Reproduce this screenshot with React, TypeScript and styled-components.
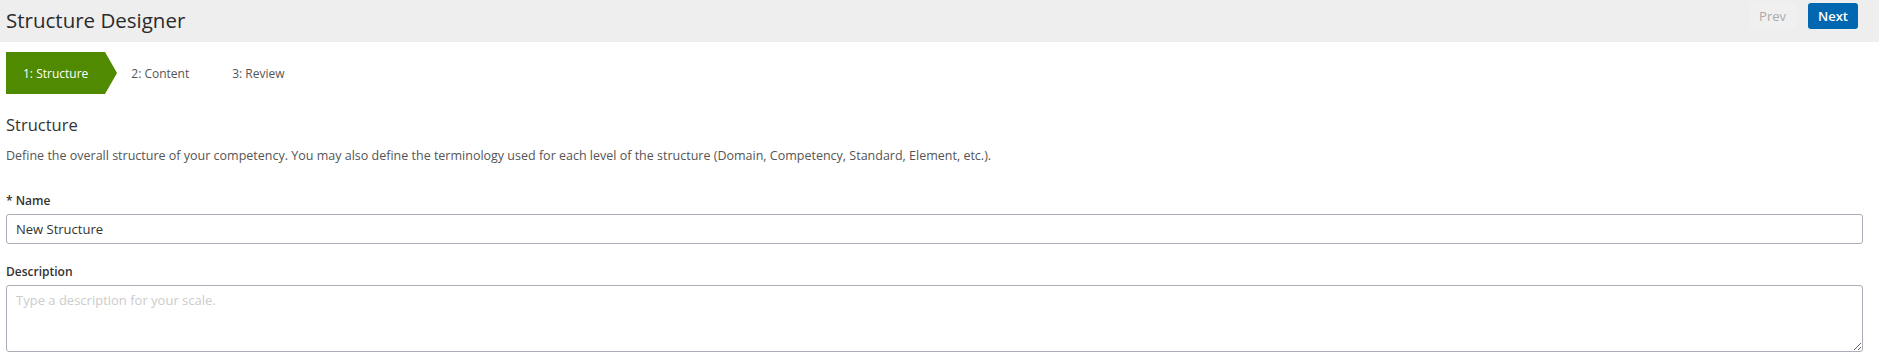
import React from "react";
import styled, { createGlobalStyle } from "styled-components";

const GlobalStyle = createGlobalStyle`
  body {
    margin: 0;
    background: #ffffff;
    font-family: "Open Sans", "Liberation Sans", sans-serif;
    color: #333333;
  }
`;

export default function App() {
    return <Page>
        <GlobalStyle/>
        <Header>
            <Title>Structure Designer</Title>
            <HeaderActions>
                <NavButton disabled>Prev</NavButton>
                <NavButton $primary>Next</NavButton>
            </HeaderActions>
        </Header>
        <Body>
            <Steps>
                <Step $active>1: Structure</Step>
                <Step>2: Content</Step>
                <Step>3: Review</Step>
            </Steps>
            <SectionTitle>Structure</SectionTitle>
            <Intro>
                Define the overall structure of your competency. You may also define the terminology used for each level of the structure (Domain, Competency, Standard, Element, etc.).
            </Intro>
            <Field $first>
                <Label>* Name</Label>
                <TextInput defaultValue="New Structure"/>
            </Field>
            <Field>
                <Label>Description</Label>
                <TextArea placeholder="Type a description for your scale."/>
            </Field>
        </Body>
    </Page>;
}

const Page = styled.div`
  width: 1879px;
`;

const Header = styled.div`
  display: flex;
  align-items: flex-start;
  justify-content: space-between;
  height: 42px;
  background: #eeeeee;
  padding: 0 21px 0 6px;
  box-sizing: border-box;
`;

const Title = styled.h1`
  margin: 0;
  padding-top: 6px;
  font-size: 20.5px;
  font-weight: 400;
  line-height: 28px;
  color: #2b2b2b;
`;

const HeaderActions = styled.div`
  display: flex;
  gap: 12px;
  padding-top: 3px;
`;

const NavButton = styled.button<{ $primary?: boolean }>`
  height: 26px;
  padding: 0 10px;
  border: none;
  border-radius: 3px;
  font-family: "Open Sans", "Liberation Sans", sans-serif;
  font-size: 13px;
  font-weight: ${p => p.$primary ? 600 : 400};
  background: ${p => p.$primary ? "#0067b0" : "#f0f0f0"};
  color: ${p => p.$primary ? "#ffffff" : "#aaaaaa"};
  cursor: pointer;
`;

const Body = styled.div`
  padding: 10px 16px 0 6px;
`;

const Steps = styled.div`
  display: flex;
  height: 42px;
`;

const Step = styled.div<{ $active?: boolean }>`
  position: relative;
  display: flex;
  align-items: center;
  padding: 0 17px;
  margin-right: 9px;
  font-size: 12px;
  color: ${p => p.$active ? "#ffffff" : "#555555"};
  background: ${p => p.$active ? "#4f8a00" : "transparent"};

  &::after {
    content: "";
    display: ${p => p.$active ? "block" : "none"};
    position: absolute;
    top: 0;
    right: -12px;
    border-top: 21px solid transparent;
    border-bottom: 21px solid transparent;
    border-left: 12px solid #4f8a00;
  }
`;

const SectionTitle = styled.h2`
  margin: 20px 0 0;
  font-size: 16.5px;
  font-weight: 400;
  line-height: 22px;
  color: #333333;
`;

const Intro = styled.p`
  margin: 11px 0 0;
  font-size: 12.5px;
  line-height: 17px;
  color: #555555;
`;

const Field = styled.div<{ $first?: boolean }>`
  display: flex;
  flex-direction: column;
  margin-top: ${p => p.$first ? "28px" : "19px"};
`;

const Label = styled.label`
  font-size: 12px;
  font-weight: 600;
  line-height: 17px;
  color: #333333;
  margin-bottom: 5px;
`;

const TextInput = styled.input`
  height: 30px;
  box-sizing: border-box;
  border: 1px solid #a9adb8;
  border-radius: 3px;
  padding: 0 9px;
  font-family: "Open Sans", "Liberation Sans", sans-serif;
  font-size: 13px;
  color: #333333;
  outline: none;
`;

const TextArea = styled.textarea`
  height: 67px;
  box-sizing: border-box;
  border: 1px solid #a9adb8;
  border-radius: 3px;
  padding: 5px 9px;
  font-family: "Open Sans", "Liberation Sans", sans-serif;
  font-size: 13px;
  color: #333333;
  outline: none;
  resize: vertical;
  &::placeholder {
    color: #cccccc;
  }
`;
